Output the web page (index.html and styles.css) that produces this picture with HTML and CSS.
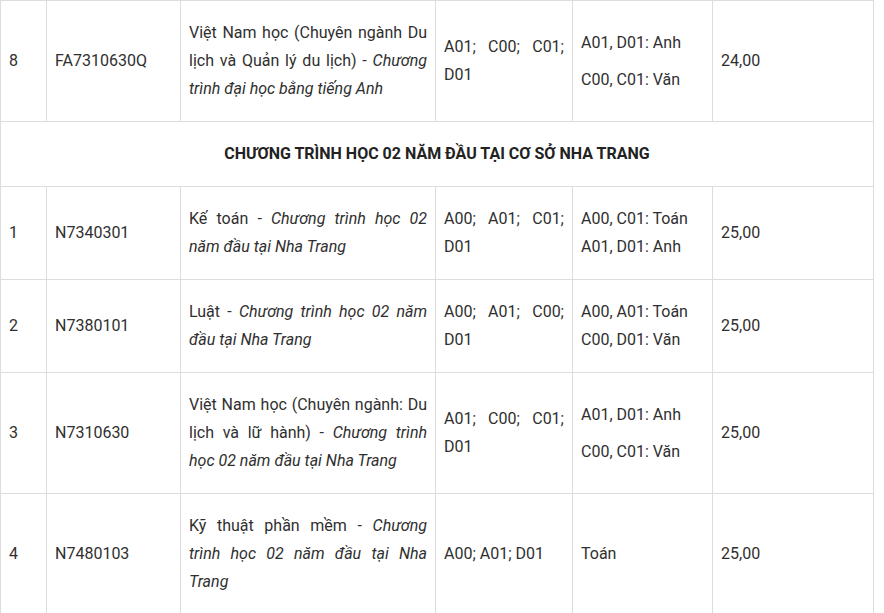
FILE: index.html
```html
<!DOCTYPE html>
<html lang="vi">
<head>
<meta charset="utf-8">
<link rel="stylesheet" href="styles.css">
</head>
<body>
<table class="tbl">
  <colgroup>
    <col class="c1"><col class="c2"><col class="c3"><col class="c4"><col class="c5"><col class="c6">
  </colgroup>
  <tbody>
    <tr>
      <td>8</td>
      <td>FA7310630Q</td>
      <td class="just">Việt Nam học (Chuyên ngành Du lịch và Quản lý du lịch) - <em>Chương trình đại học bằng tiếng Anh</em></td>
      <td class="just">A01; C00; C01; D01</td>
      <td><p>A01, D01: Anh</p><p>C00, C01: Văn</p></td>
      <td>24,00</td>
    </tr>
    <tr>
      <td colspan="6" class="section">CHƯƠNG TRÌNH HỌC 02 NĂM ĐẦU TẠI CƠ SỞ NHA TRANG</td>
    </tr>
    <tr>
      <td>1</td>
      <td>N7340301</td>
      <td class="just">Kế toán - <em>Chương trình học 02 năm đầu tại Nha Trang</em></td>
      <td class="just">A00; A01; C01; D01</td>
      <td>A00, C01: Toán<br>A01, D01: Anh</td>
      <td>25,00</td>
    </tr>
    <tr>
      <td>2</td>
      <td>N7380101</td>
      <td class="just">Luật - <em>Chương trình học 02 năm đầu tại Nha Trang</em></td>
      <td class="just">A00; A01; C00; D01</td>
      <td>A00, A01: Toán<br>C00, D01: Văn</td>
      <td>25,00</td>
    </tr>
    <tr>
      <td>3</td>
      <td>N7310630</td>
      <td class="just">Việt Nam học (Chuyên ngành: Du lịch và lữ hành) - <em>Chương trình học 02 năm đầu tại Nha Trang</em></td>
      <td class="just">A01; C00; C01; D01</td>
      <td><p>A01, D01: Anh</p><p>C00, C01: Văn</p></td>
      <td>25,00</td>
    </tr>
    <tr>
      <td>4</td>
      <td>N7480103</td>
      <td class="just">Kỹ thuật phần mềm - <em>Chương trình học 02 năm đầu tại Nha Trang</em></td>
      <td>A00; A01; D01</td>
      <td>Toán</td>
      <td>25,00</td>
    </tr>
  </tbody>
</table>
</body>
</html>
```

FILE: styles.css
```css
html, body {
  margin: 0;
  padding: 0;
  background: #ffffff;
}

body {
  font-family: Roboto, "Noto Sans", sans-serif;
  font-size: 16px;
  line-height: 28px;
  color: #2f2f2f;
}

.tbl {
  border-collapse: collapse;
  table-layout: fixed;
  width: 873px;
}

.c1 { width: 46px; }
.c2 { width: 134px; }
.c3 { width: 255px; }
.c4 { width: 137px; }
.c5 { width: 140px; }
.c6 { width: 161px; }

.tbl td {
  border: 1px solid #dddddd;
  padding: 18px 8px;
  vertical-align: middle;
  text-align: left;
}

.tbl td.just {
  text-align: justify;
}

.tbl td p {
  margin: 0;
}

.tbl td p + p {
  margin-top: 9px;
}

.tbl td.section {
  text-align: center;
  font-weight: 700;
  font-size: 16px;
  color: #222222;
}

em {
  font-style: italic;
}
```
